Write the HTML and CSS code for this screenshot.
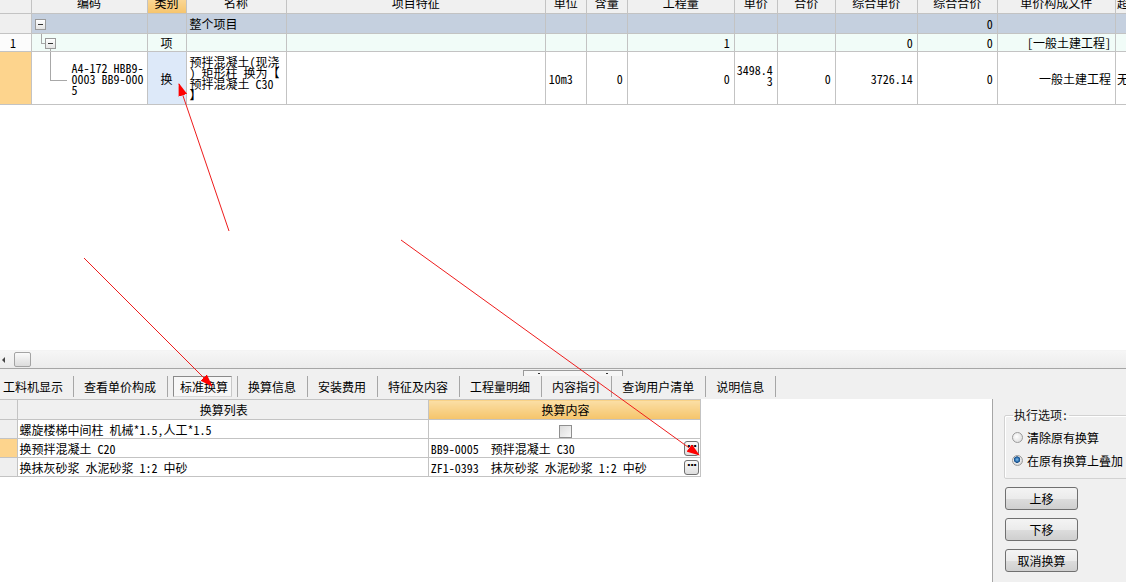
FILE: index.html
```html
<!DOCTYPE html>
<html lang="zh-CN">
<head>
<meta charset="utf-8">
<title>标准换算</title>
<link rel="stylesheet" href="styles.css">
</head>
<body>
<div class="app">
  <div class="top-pane">
    <table class="grid">
      <colgroup>
        <col class="w31"><col class="w116"><col class="w39"><col class="w100"><col class="w259">
        <col class="w41"><col class="w41"><col class="w107"><col class="w43"><col class="w58">
        <col class="w82"><col class="w80"><col class="w118"><col class="w100">
      </colgroup>
      <thead>
        <tr>
          <th></th><th>编码</th><th class="hl">类别</th><th>名称</th><th>项目特征</th>
          <th>单位</th><th>含量</th><th>工程量</th><th>单价</th><th>合价</th>
          <th>综合单价</th><th>综合合价</th><th>单价构成文件</th><th class="left">超高过滤类别</th>
        </tr>
      </thead>
      <tbody>
        <tr class="r-total">
          <td class="idx gray"></td>
          <td class="code"><span class="fold"></span></td>
          <td></td>
          <td class="bold pl">整个项目</td>
          <td></td><td></td><td></td><td></td><td></td><td></td><td></td>
          <td class="num bold">0</td><td></td><td></td>
        </tr>
        <tr class="r-item">
          <td class="idx">1</td>
          <td class="code tree1"><span class="fold fold-l2"></span></td>
          <td class="center">项</td>
          <td></td><td></td><td></td><td></td>
          <td class="num">1</td><td></td><td></td>
          <td class="num">0</td><td class="num">0</td>
          <td class="num">[一般土建工程]</td><td></td>
        </tr>
        <tr class="r-sub">
          <td class="idx sel"></td>
          <td class="code tree2 wrap">A4-172 HBB9-<br>0003 BB9-000<br>5</td>
          <td class="center kind">换</td>
          <td class="pl wrap">预拌混凝土(现浇<br>) 矩形柱 换为【<br>预拌混凝土 C30<br>】</td>
          <td></td>
          <td class="pl">10m3</td>
          <td class="num">0</td>
          <td class="num">0</td>
          <td class="num wrap price">3498.4<br>3</td>
          <td class="num">0</td>
          <td class="num">3726.14</td>
          <td class="num">0</td>
          <td class="num">一般土建工程</td>
          <td class="left">无</td>
        </tr>
      </tbody>
    </table>
  </div>

  <div class="hscroll"><span class="sb-arrow"></span><span class="sb-thumb"></span></div>
  <div class="splitter"><span class="grip"><i></i><i></i></span></div>

  <div class="tabs">
    <div class="tab first">工料机显示</div>
    <div class="tab">查看单价构成</div>
    <div class="tab active"><span>标准换算</span></div>
    <div class="tab">换算信息</div>
    <div class="tab">安装费用</div>
    <div class="tab">特征及内容</div>
    <div class="tab">工程量明细</div>
    <div class="tab">内容指引</div>
    <div class="tab">查询用户清单</div>
    <div class="tab">说明信息</div>
  </div>

  <div class="bottom">
    <div class="bottom-main">
      <table class="sub">
        <colgroup><col class="w17"><col class="w411"><col class="w272"></colgroup>
        <thead>
          <tr><th class="idx gray"></th><th>换算列表</th><th class="hl">换算内容</th></tr>
        </thead>
        <tbody>
          <tr>
            <td class="idx gray"></td>
            <td>螺旋楼梯中间柱 机械*1.5,人工*1.5</td>
            <td class="center"><span class="checkbox"></span></td>
          </tr>
          <tr>
            <td class="idx sel"></td>
            <td>换预拌混凝土 C20</td>
            <td><div class="cell-btn"><span>BB9-0005&nbsp; 预拌混凝土 C30</span><span class="dots">···</span></div></td>
          </tr>
          <tr>
            <td class="idx gray"></td>
            <td>换抹灰砂浆 水泥砂浆 1:2 中砂</td>
            <td><div class="cell-btn"><span>ZF1-0393&nbsp; 抹灰砂浆 水泥砂浆 1:2 中砂</span><span class="dots">···</span></div></td>
          </tr>
        </tbody>
      </table>
    </div>
    <div class="side">
      <fieldset class="options">
        <legend>执行选项:</legend>
        <div class="radio-row"><span class="radio"></span>清除原有换算</div>
        <div class="radio-row"><span class="radio on"></span>在原有换算上叠加</div>
      </fieldset>
      <button class="btn">上移</button>
      <button class="btn">下移</button>
      <button class="btn">取消换算</button>
    </div>
  </div>
</div>

<svg class="annot" width="1126" height="582" viewBox="0 0 1126 582">
  <defs>
    <marker id="ah" markerWidth="13" markerHeight="9" refX="12" refY="4.5" orient="auto" markerUnits="userSpaceOnUse">
      <path d="M0,0 L13,4.5 L0,9 Z" fill="#ff0000"/>
    </marker>
  </defs>
  <line x1="229" y1="231" x2="179" y2="84" stroke="#ee1c1c" stroke-width="1" marker-end="url(#ah)"/>
  <line x1="84" y1="258" x2="212" y2="386" stroke="#ee1c1c" stroke-width="1" marker-end="url(#ah)"/>
  <line x1="401" y1="240" x2="699" y2="455" stroke="#ee1c1c" stroke-width="1" marker-end="url(#ah)"/>
</svg>
</body>
</html>
```

FILE: styles.css
```css
* { box-sizing: border-box; }
html, body { margin: 0; padding: 0; }
body {
  width: 1126px;
  height: 582px;
  overflow: hidden;
  position: relative;
  background: #ffffff;
  color: #000;
  font-family: "Noto Sans Mono CJK SC", "Noto Sans CJK SC", "DejaVu Sans Mono", monospace;
  font-size: 12px;
}
.app { display: flex; flex-direction: column; height: 582px; }

/* ---------- top grid ---------- */
.top-pane { height: 350px; flex: none; overflow: hidden; }
.grid {
  border-collapse: collapse;
  table-layout: fixed;
  width: 1216px;
  margin-top: -6px;
}
.w31 { width: 31px; } .w116 { width: 116px; } .w39 { width: 39px; } .w100 { width: 100px; }
.w259 { width: 259px; } .w41 { width: 41px; } .w107 { width: 107px; } .w43 { width: 43px; }
.w58 { width: 58px; } .w82 { width: 82px; } .w80 { width: 80px; } .w118 { width: 118px; }
.w17 { width: 17px; } .w411 { width: 411px; } .w272 { width: 272px; }

.grid th, .grid td {
  border: 1px solid #c3c3c3;
  padding: 0;
  overflow: hidden;
  white-space: nowrap;
  font-weight: normal;
  line-height: 11px;
}
.grid th:first-child, .grid td:first-child { border-left: none; }
.grid thead th {
  height: 19px;
  background: #f0f0f0;
  text-align: center;
  line-height: 15px;
  vertical-align: top;
}
.grid thead th.hl { background: linear-gradient(#fbdca0, #f6c46c); }
.grid thead th.left { text-align: left; padding-left: 3px; }

.r-total { height: 20px; background: #c5d0df; }
.r-item { height: 18px; background: #f1fcf8; }
.r-sub { height: 53px; background: #fff; }

.idx { text-align: left; padding-left: 10px !important; background: #fcfcfc; }
.idx.gray { background: #efefef; }
.idx.sel { background: #fdd48d; }
.bold { font-weight: bold; }
.pl { padding-left: 3px !important; }
.num { text-align: right; padding-right: 4px !important; }
.center { text-align: center; }
.left { text-align: left; padding-left: 1px !important; }
.kind { background: #dde9f9; }
.wrap { white-space: normal; }
.price { vertical-align: middle; padding-bottom: 7px !important; }

.code { position: relative; }
.code.wrap { padding-left: 40px !important; }
.fold {
  display: inline-block;
  vertical-align: middle;
  width: 11px;
  height: 11px;
  margin-left: 3px;
  border: 1px solid #9a9a9a;
  background: linear-gradient(#ffffff, #e4e4e4);
  position: relative;
}
.fold::after {
  content: "";
  position: absolute;
  left: 2px;
  right: 2px;
  top: 4px;
  height: 1px;
  background: #333;
}
.fold.fold-l2 { margin-left: 13px; }
.tree1::before {
  content: "";
  position: absolute;
  left: 9px;
  top: 0;
  width: 4px;
  height: 9px;
  border-left: 1px solid #a8a8a8;
  border-bottom: 1px solid #a8a8a8;
}
.tree1::after {
  content: "";
  position: absolute;
  left: 18px;
  top: 15px;
  bottom: 0;
  border-left: 1px solid #a8a8a8;
}
.tree2::before {
  content: "";
  position: absolute;
  left: 18px;
  top: 0;
  width: 16px;
  height: 28px;
  border-left: 1px solid #a8a8a8;
  border-bottom: 1px solid #a8a8a8;
}

/* ---------- scrollbar / splitter ---------- */
.hscroll {
  height: 18px;
  flex: none;
  display: flex;
  align-items: center;
  background: linear-gradient(#f6f6f6, #ececec);
  border-top: 1px solid #f4f4f4;
}
.sb-arrow {
  width: 0; height: 0;
  margin-left: 2px;
  border-top: 3px solid transparent;
  border-bottom: 3px solid transparent;
  border-right: 3px solid #444;
}
.sb-thumb {
  width: 17px;
  height: 15px;
  margin-left: 9px;
  border: 1px solid #a3a3a3;
  border-radius: 2px;
  background: linear-gradient(#fafafa, #dcdcdc);
}
.splitter {
  height: 8px;
  flex: none;
  border-top: 1px solid #a6a6a6;
  background: #f0f0f0;
  padding-top: 1px;
}
.grip {
  display: flex;
  justify-content: space-between;
  align-items: center;
  width: 100px;
  height: 7px;
  margin-left: 523px;
  padding: 0 14px;
  border: 1px solid #9a9a9a;
  background: #f6f6f6;
}
.grip i { width: 2px; height: 1px; background: #333; }

/* ---------- tabs ---------- */
.tabs {
  height: 23px;
  flex: none;
  display: flex;
  align-items: flex-start;
  background: #f0f0f0;
  white-space: nowrap;
}
.tab {
  height: 21px;
  line-height: 21px;
  padding: 0 11px 0 10px;
  border-right: 1px solid #a6a6a6;
}
.tab.first { padding: 0 10px 0 3px; }
.tab.active { padding: 0 5px; }
.tab.active span {
  display: block;
  height: 21px;
  line-height: 19px;
  padding: 0 3px 0 6px;
  border: 1px solid #8a8a8a;
  border-right-color: #c8c8c8;
  border-bottom-color: #dadada;
  background: #f7f7f7;
}

/* ---------- bottom ---------- */
.bottom { flex: 1; display: flex; min-height: 0; }
.bottom-main {
  width: 993px;
  flex: none;
  background: #fff;
  border-right: 1px solid #a6a6a6;
}
.sub {
  border-collapse: collapse;
  table-layout: fixed;
  width: 701px;
}
.sub th, .sub td {
  border: 1px solid #c3c3c3;
  height: 19px;
  padding: 0 0 0 2px;
  white-space: nowrap;
  overflow: hidden;
  font-weight: normal;
  line-height: 17px;
}
.sub th:first-child, .sub td:first-child { border-left: none; }
.sub th { background: #f0f0f0; text-align: center; height: 20px; }
.sub th.hl { background: linear-gradient(#fbdfa6, #f5c46a); }
.sub td.center { text-align: center; }
.checkbox {
  display: inline-block;
  vertical-align: middle;
  width: 13px;
  height: 13px;
  border: 1px solid #8f8f8f;
  background: linear-gradient(135deg, #dcdcdc, #f8f8f8);
}
.cell-btn { display: flex; align-items: center; justify-content: space-between; padding-right: 1px; }
.dots {
  width: 15px;
  height: 15px;
  border: 1px solid #707070;
  border-radius: 3px;
  background: linear-gradient(#fafafa, #dedede);
  font-weight: bold;
  font-size: 11px;
  line-height: 10px;
  text-align: center;
  letter-spacing: -1px;
  font-family: "DejaVu Sans", sans-serif;
}

.side {
  flex: 1;
  overflow: hidden;
  background: #f0f0f0;
  padding: 9px 0 0 11px;
}
.options {
  width: 140px;
  margin: 0;
  padding: 4px 0 6px 7px;
  border: 1px solid #d2d2d2;
  box-shadow: inset 1px 1px 0 #fff;
  border-radius: 2px;
}
.options legend {
  padding: 0 1px;
  margin-left: 1px;
  line-height: 14px;
  color: #111;
}
.radio-row {
  display: flex;
  align-items: center;
  height: 23px;
  white-space: nowrap;
}
.radio {
  width: 11px;
  height: 11px;
  margin-right: 4px;
  border: 1px solid #9b9b9b;
  border-radius: 50%;
  background: radial-gradient(circle at 40% 40%, #ffffff, #d6d6d6);
}
.radio.on {
  background: radial-gradient(circle at 45% 40%, #7fc0f0 0, #1c5c9c 2.5px, #1c4f86 3px, #eeeeee 3.5px, #d8d8d8 5px);
}
.btn {
  display: block;
  width: 73px;
  height: 23px;
  margin: 8px 0 0 1px;
  padding: 0;
  border: 1px solid #707070;
  border-radius: 3px;
  background: linear-gradient(#f4f4f4 0, #ebebeb 50%, #dddddd 51%, #cfcfcf 100%);
  font-family: inherit;
  font-size: 12px;
  color: #000;
}

/* ---------- annotations ---------- */
.annot { position: absolute; left: 0; top: 0; pointer-events: none; }
```
